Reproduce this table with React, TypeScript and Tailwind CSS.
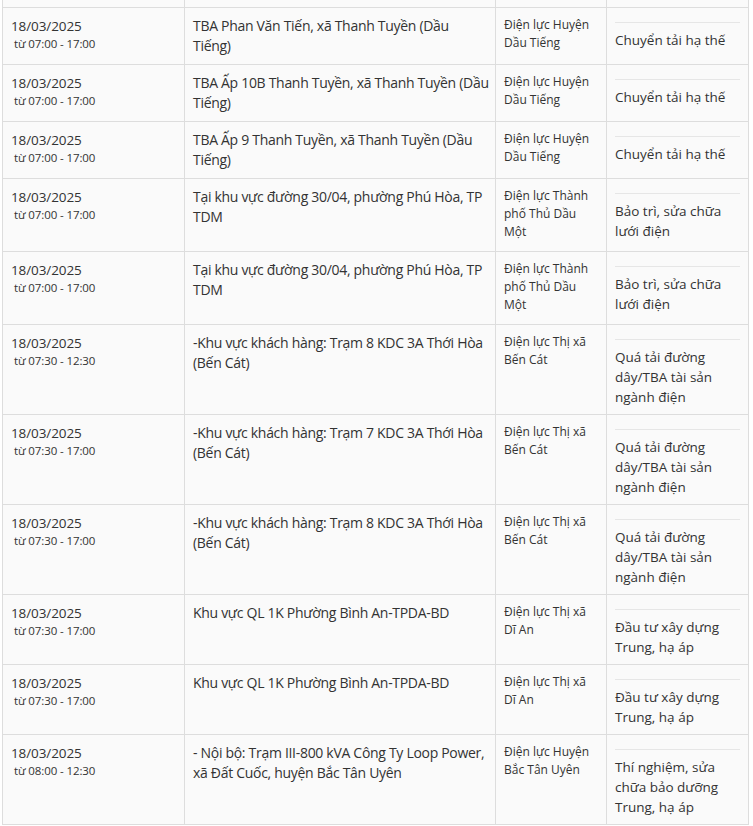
import React from "react";

type Row = {
  time: string;
  place: string[];
  unit: string[];
  reason: string[];
  h: string;
};

const rows: Row[] = [
  { time: "07:00 - 17:00", place: ["TBA Phan Văn Tiến, xã Thanh Tuyền (Dầu", "Tiếng)"], unit: ["Điện lực Huyện", "Dầu Tiếng"], reason: ["Chuyển tải hạ thế"], h: "h-[57px]" },
  { time: "07:00 - 17:00", place: ["TBA Ấp 10B Thanh Tuyền, xã Thanh Tuyền (Dầu", "Tiếng)"], unit: ["Điện lực Huyện", "Dầu Tiếng"], reason: ["Chuyển tải hạ thế"], h: "h-[57px]" },
  { time: "07:00 - 17:00", place: ["TBA Ấp 9 Thanh Tuyền, xã Thanh Tuyền (Dầu", "Tiếng)"], unit: ["Điện lực Huyện", "Dầu Tiếng"], reason: ["Chuyển tải hạ thế"], h: "h-[57px]" },
  { time: "07:00 - 17:00", place: ["Tại khu vực đường 30/04, phường Phú Hòa, TP", "TDM"], unit: ["Điện lực Thành", "phố Thủ Dầu", "Một"], reason: ["Bảo trì, sửa chữa", "lưới điện"], h: "h-[73px]" },
  { time: "07:00 - 17:00", place: ["Tại khu vực đường 30/04, phường Phú Hòa, TP", "TDM"], unit: ["Điện lực Thành", "phố Thủ Dầu", "Một"], reason: ["Bảo trì, sửa chữa", "lưới điện"], h: "h-[73px]" },
  { time: "07:30 - 12:30", place: ["-Khu vực khách hàng: Trạm 8 KDC 3A Thới Hòa", "(Bến Cát)"], unit: ["Điện lực Thị xã", "Bến Cát"], reason: ["Quá tải đường", "dây/TBA tài sản", "ngành điện"], h: "h-[90px]" },
  { time: "07:30 - 17:00", place: ["-Khu vực khách hàng: Trạm 7 KDC 3A Thới Hòa", "(Bến Cát)"], unit: ["Điện lực Thị xã", "Bến Cát"], reason: ["Quá tải đường", "dây/TBA tài sản", "ngành điện"], h: "h-[90px]" },
  { time: "07:30 - 17:00", place: ["-Khu vực khách hàng: Trạm 8 KDC 3A Thới Hòa", "(Bến Cát)"], unit: ["Điện lực Thị xã", "Bến Cát"], reason: ["Quá tải đường", "dây/TBA tài sản", "ngành điện"], h: "h-[90px]" },
  { time: "07:30 - 17:00", place: ["Khu vực QL 1K Phường Bình An-TPDA-BD"], unit: ["Điện lực Thị xã", "Dĩ An"], reason: ["Đầu tư xây dựng", "Trung, hạ áp"], h: "h-[70px]" },
  { time: "07:30 - 17:00", place: ["Khu vực QL 1K Phường Bình An-TPDA-BD"], unit: ["Điện lực Thị xã", "Dĩ An"], reason: ["Đầu tư xây dựng", "Trung, hạ áp"], h: "h-[70px]" },
  { time: "08:00 - 12:30", place: ["- Nội bộ: Trạm III-800 kVA Công Ty Loop Power,", "xã Đất Cuốc, huyện Bắc Tân Uyên"], unit: ["Điện lực Huyện", "Bắc Tân Uyên"], reason: ["Thí nghiệm, sửa", "chữa bảo dưỡng", "Trung, hạ áp"], h: "h-[90px]" },
];

const cell = "border border-[#dddddd] align-top px-2 pt-2 pb-0";

export default function App() {
  return (
    <div className="w-[753px] h-[826px] overflow-hidden bg-white text-[#333333]" style={{ fontFamily: '"Open Sans", "Noto Sans", sans-serif' }}>
      <table className="ml-[2px] mt-[-1px] w-[747px] table-fixed border-collapse bg-[#fafafa]">
        <colgroup>
          <col className="w-[182px]" />
          <col className="w-[311px]" />
          <col className="w-[111px]" />
          <col className="w-[142px]" />
        </colgroup>
        <tbody>
          <tr className="h-[8px]">
            <td className="border border-[#dddddd] border-t-0 p-0"></td>
            <td className="border border-[#dddddd] border-t-0 p-0"></td>
            <td className="border border-[#dddddd] border-t-0 p-0"></td>
            <td className="border border-[#dddddd] border-t-0 p-0"></td>
          </tr>
          {rows.map((r, i) => (
            <tr key={i} className={r.h}>
              <td className={cell}>
                <div className="text-[13.5px] leading-5 tracking-[-0.1px]">18/03/2025</div>
                <div className="text-[11.5px] leading-4 whitespace-pre tracking-[-0.1px]">{" từ " + r.time}</div>
              </td>
              <td className={cell}>
                {r.place.map((l, j) => (
                  <div key={j} className="text-[14px] leading-5 whitespace-nowrap tracking-[-0.3px]">{l}</div>
                ))}
              </td>
              <td className={cell}>
                {r.unit.map((l, j) => (
                  <div key={j} className="text-[12px] leading-[18px] whitespace-nowrap">{l}</div>
                ))}
              </td>
              <td className={cell}>
                <div className="mt-[6px] border-t border-[#e6e6e6]"></div>
                <div className="mt-[7px]">
                  {r.reason.map((l, j) => (
                    <div key={j} className="text-[13.5px] leading-5 whitespace-nowrap">{l}</div>
                  ))}
                </div>
              </td>
            </tr>
          ))}
        </tbody>
      </table>
    </div>
  );
}
